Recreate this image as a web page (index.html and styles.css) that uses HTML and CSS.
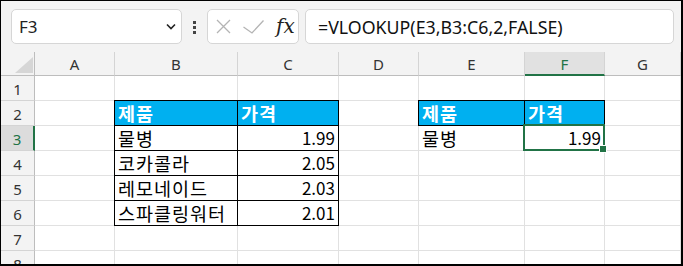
FILE: index.html
```html
<!DOCTYPE html>
<html lang="ko">
<head>
  <meta charset="UTF-8">
  <title>VLOOKUP</title>
  <link rel="stylesheet" href="styles.css">
</head>
<body>

<div class="window">
  <div class="formula-bar">
    <div class="name-box">
      <span>F3</span>
      <svg class="chevron" width="10" height="7" viewBox="0 0 10 7"><path d="M1 1.5 L5 5.5 L9 1.5" fill="none" stroke="#222" stroke-width="1.6"/></svg>
    </div>
    <div class="grip"><i></i><i></i><i></i></div>
    <div class="fx-box">
      <svg class="cancel" width="15" height="15" viewBox="0 0 15 15"><path d="M1 1 L14 14 M14 1 L1 14" stroke="#b4b4b4" stroke-width="1.3" fill="none"/></svg>
      <svg class="enter" width="21" height="14" viewBox="0 0 21 14"><path d="M0.5 7 L9 13 L20.5 0.5" stroke="#b4b4b4" stroke-width="1.3" fill="none"/></svg>
      <span class="fx">fx</span>
    </div>
    <div class="formula">=VLOOKUP(E3,B3:C6,2,FALSE)</div>
  </div>

  <div class="sheet">
    <div class="corner"><svg width="18" height="16" viewBox="0 0 18 16"><path d="M18 0 L18 16 L0 16 Z" fill="#d6d6d6"/></svg></div>
    <div class="col-h">A</div>
    <div class="col-h">B</div>
    <div class="col-h">C</div>
    <div class="col-h">D</div>
    <div class="col-h">E</div>
    <div class="col-h active">F</div>
    <div class="col-h">G</div>

    <div class="row-h">1</div>
    <div class="c"></div><div class="c"></div><div class="c"></div><div class="c"></div><div class="c"></div><div class="c"></div><div class="c"></div>

    <div class="row-h">2</div>
    <div class="c"></div>
    <div class="c t head">제품</div>
    <div class="c t head">가격</div>
    <div class="c"></div>
    <div class="c t head">제품</div>
    <div class="c t head">가격</div>
    <div class="c"></div>

    <div class="row-h active">3</div>
    <div class="c"></div>
    <div class="c t">물병</div>
    <div class="c t num">1.99</div>
    <div class="c"></div>
    <div class="c">물병</div>
    <div class="c num sel">1.99</div>
    <div class="c"></div>

    <div class="row-h">4</div>
    <div class="c"></div>
    <div class="c t">코카콜라</div>
    <div class="c t num">2.05</div>
    <div class="c"></div><div class="c"></div><div class="c"></div><div class="c"></div>

    <div class="row-h">5</div>
    <div class="c"></div>
    <div class="c t">레모네이드</div>
    <div class="c t num">2.03</div>
    <div class="c"></div><div class="c"></div><div class="c"></div><div class="c"></div>

    <div class="row-h">6</div>
    <div class="c"></div>
    <div class="c t">스파클링워터</div>
    <div class="c t num">2.01</div>
    <div class="c"></div><div class="c"></div><div class="c"></div><div class="c"></div>

    <div class="row-h">7</div>
    <div class="c"></div><div class="c"></div><div class="c"></div><div class="c"></div><div class="c"></div><div class="c"></div><div class="c"></div>

    <div class="row-h">8</div>
    <div class="c"></div><div class="c"></div><div class="c"></div><div class="c"></div><div class="c"></div><div class="c"></div><div class="c"></div>
  </div>
</div>

</body>
</html>
```

FILE: styles.css
```css
:root {
  --chrome: #f3f3f3;
  --grid: #e1e1e1;
  --green: #217346;
  --blue: #00b0f0;
}

* {
  box-sizing: border-box;
}

html, body {
  margin: 0;
  background: #fff;
}

.window {
  width: 683px;
  height: 266px;
  overflow: hidden;
  border: 1px solid #000;
  border-right-width: 2px;
  border-bottom-width: 2px;
  background: var(--chrome);
  font-family: "Noto Sans", "Open Sans", sans-serif;
}

/* formula bar */
.formula-bar {
  display: flex;
  align-items: flex-start;
  height: 51px;
  padding: 8px 7px 0 10px;
}

.name-box,
.fx-box,
.formula {
  height: 35px;
  background: #fff;
  border: 1px solid #d6d6d6;
  border-radius: 5px;
  display: flex;
  align-items: center;
}

.name-box {
  width: 171px;
  padding: 0 5px 0 7px;
  justify-content: space-between;
  font-size: 17px;
  color: #222;
}

.grip {
  width: 25px;
  display: flex;
  flex-direction: column;
  align-items: center;
  gap: 2px;
  padding-top: 12px;
}
.grip i {
  width: 3px;
  height: 3px;
  background: #444;
}

.fx-box {
  width: 92px;
  padding-left: 8px;
}
.fx-box .enter {
  margin-left: 12px;
}
.fx {
  margin-left: 12px;
  font-family: "DejaVu Serif", "Liberation Serif", serif;
  font-style: italic;
  font-size: 20px;
  color: #222;
  line-height: 1;
  padding-bottom: 2px;
}

.formula {
  flex: 1;
  margin-left: 6px;
  padding-left: 12px;
  font-size: 17.8px;
  color: #111;
}

/* sheet */
.sheet {
  display: grid;
  grid-template-columns: 34px 80px 123px 101px 80px 106px 80px 1fr;
  grid-template-rows: 24px repeat(8, 25px);
}

.corner {
  background: var(--chrome);
  border-right: 1px solid #bdbdbd;
  border-bottom: 1px solid #bdbdbd;
  display: flex;
  align-items: flex-end;
  justify-content: flex-end;
  padding: 0 1px 2px 0;
}

.col-h {
  background: var(--chrome);
  border-right: 1px solid #d4d4d4;
  border-bottom: 1px solid #bdbdbd;
  text-align: center;
  font-size: 15px;
  line-height: 25px;
  color: #333;
}
.col-h.active {
  background: #e1e1e1;
  border-bottom: 2px solid var(--green);
  color: var(--green);
}

.row-h {
  background: var(--chrome);
  border-right: 1px solid #bdbdbd;
  border-bottom: 1px solid #d4d4d4;
  text-align: center;
  font-size: 15px;
  line-height: 26px;
  color: #333;
}
.row-h.active {
  background: #dcdcdc;
  border-right: 2px solid var(--green);
  color: var(--green);
}

.c {
  background: #fff;
  border-right: 1px solid var(--grid);
  border-bottom: 1px solid var(--grid);
  padding: 0 3px;
  font-family: "Noto Sans CJK KR", "Noto Sans", sans-serif;
  font-size: 18.5px;
  letter-spacing: 1px;
  line-height: 24px;
  color: #000;
  white-space: nowrap;
}

.num {
  text-align: right;
  font-size: 17px;
  letter-spacing: 0;
}

/* bordered table cells overlap the grid line to their left and above */
.t {
  margin: -1px 0 0 -1px;
  border: 1px solid #000;
}
.t.head {
  background: var(--blue);
  color: #fff;
  font-weight: 700;
}

.sel {
  position: relative;
}
.sel::after {
  content: "";
  position: absolute;
  left: -2px;
  top: -2px;
  right: -1px;
  bottom: -1px;
  border: 2px solid var(--green);
}
.sel::before {
  content: "";
  position: absolute;
  right: -3px;
  bottom: -3px;
  width: 6px;
  height: 6px;
  background: var(--green);
  border: 1px solid #fff;
  z-index: 1;
}
```
